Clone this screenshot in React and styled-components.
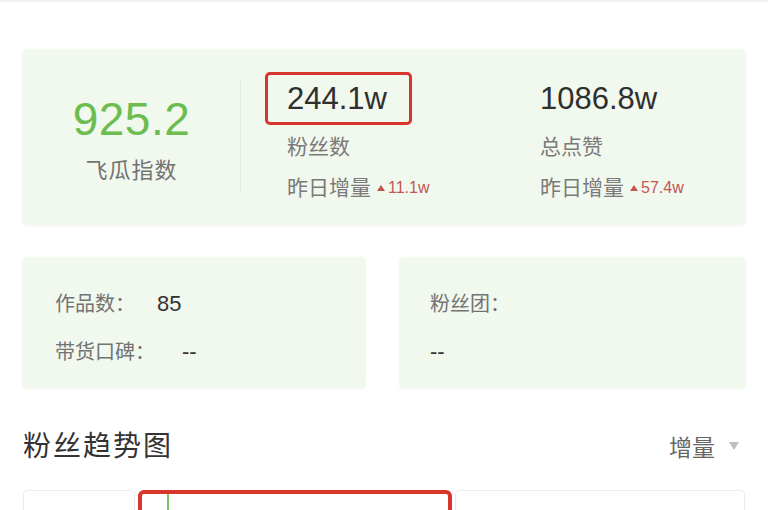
import styled, { createGlobalStyle } from 'styled-components'

const GlobalStyle = createGlobalStyle`
  html, body {
    margin: 0;
    padding: 0;
    background: #ffffff;
    height: 510px;
    overflow: hidden;
  }
  body {
    font-family: "Liberation Sans", "Noto Sans CJK SC", sans-serif;
    color: #333;
  }
`;

const Page = styled.div`
  border-top: 2px solid #eef0f2;
  padding: 48px 23px 0 23px;
  box-sizing: border-box;
  height: 510px;
`;

const Card = styled.div`
  background: #f1f8ee;
  border-radius: 4px;
  box-shadow: 0 0 3px rgba(220, 232, 214, 0.8);
`;

const SummaryCard = styled(Card)`
  display: flex;
  padding: 22px 0;
`;

const IndexBlock = styled.div`
  flex: 0 0 217px;
  display: flex;
  flex-direction: column;
  align-items: center;
  padding-top: 24px;
`;

const IndexValue = styled.div`
  font-size: 46px;
  line-height: 1;
  color: #6cbd4f;
  letter-spacing: 0.5px;
`;

const IndexLabel = styled.div`
  margin-top: 15px;
  font-size: 22px;
  line-height: 1.3;
  color: #737373;
  letter-spacing: 1px;
`;

const Divider = styled.div`
  flex: 0 0 1px;
  height: 112px;
  align-self: center;
  background: #e3e8e0;
`;

const StatColumn = styled.div`
  flex: 0 0 ${p => p.$width || 207}px;
  box-sizing: border-box;
  padding-left: 46px;
  display: flex;
  flex-direction: column;
  align-items: flex-start;
`;

const Highlight = styled.div`
  height: 53px;
  box-sizing: border-box;
  margin-left: -22px;
  padding: 0 22px 0 19px;
  border: 3px solid ${p => (p.$marked ? '#d8352c' : 'transparent')};
  border-radius: 5px;
  display: flex;
  align-items: center;
  font-size: 31px;
  color: #2f2f2f;
`;

const StatLabel = styled.div`
  margin-top: 7px;
  font-size: 21px;
  line-height: 1.4;
  color: #7a7a7a;
`;

const GrowthRow = styled.div`
  margin-top: 12px;
  display: flex;
  align-items: center;
  font-size: 21px;
  line-height: 1.4;
  color: #7a7a7a;
`;

const Growth = styled.span`
  margin-left: 6px;
  font-size: 16px;
  color: #c0574f;
  display: flex;
  align-items: center;
  gap: 3px;
  &::before {
    content: '';
    border-left: 4px solid transparent;
    border-right: 4px solid transparent;
    border-bottom: 6px solid #c0574f;
  }
`;

const InfoRow = styled.div`
  margin-top: 33px;
  display: grid;
  grid-template-columns: 342px 345px;
  justify-content: space-between;
`;

const InfoCard = styled(Card)`
  height: 130px;
  box-sizing: border-box;
  padding: 32px 0 0 ${p => p.$pad}px;
`;

const InfoLine = styled.div`
  display: flex;
  align-items: center;
  font-size: 20px;
  line-height: 28px;
  color: #737373;
  & + & {
    margin-top: 20px;
  }
`;

const InfoValue = styled.span`
  margin-left: ${p => p.$gap ?? 22}px;
  font-size: 22px;
  color: #333;
`;

const SectionHead = styled.div`
  margin-top: 39px;
  display: flex;
  justify-content: space-between;
  align-items: center;
`;

const SectionTitle = styled.h2`
  margin: 0;
  font-size: 28px;
  font-weight: 400;
  line-height: 1.4;
  color: #333;
  letter-spacing: 2px;
`;

const Toggle = styled.div`
  display: flex;
  align-items: center;
  gap: 14px;
  padding-right: 6px;
  font-size: 23px;
  color: #666;
  &::after {
    content: '';
    border-left: 5px solid transparent;
    border-right: 5px solid transparent;
    border-top: 8px solid #bfbfbf;
  }
`;

const ChartRow = styled.div`
  margin-top: 24px;
  display: flex;
  gap: 3px;
`;

const ChartCell = styled.div`
  flex: 0 0 ${p => p.$width}px;
  height: 80px;
  box-sizing: border-box;
  border: 1px solid #ececec;
  border-radius: 4px;
  padding: 14px 0 0 30px;
  font-size: 20px;
  color: #777;
`;

const MarkedCell = styled.div`
  flex: 0 0 314px;
  height: 80px;
  box-sizing: border-box;
  border: 4px solid #d8352c;
  border-radius: 6px;
  padding-left: 25px;
`;

const Axis = styled.div`
  width: 2px;
  height: 100%;
  background: #7dbf63;
`;

export default function App() {
  return (
    <>
      <GlobalStyle />
      <Page>
        <SummaryCard>
          <IndexBlock>
            <IndexValue>925.2</IndexValue>
            <IndexLabel>飞瓜指数</IndexLabel>
          </IndexBlock>
          <Divider />
          <StatColumn $width={253}>
            <Highlight $marked>244.1w</Highlight>
            <StatLabel>粉丝数</StatLabel>
            <GrowthRow>
              昨日增量<Growth>11.1w</Growth>
            </GrowthRow>
          </StatColumn>
          <StatColumn>
            <Highlight>1086.8w</Highlight>
            <StatLabel>总点赞</StatLabel>
            <GrowthRow>
              昨日增量<Growth>57.4w</Growth>
            </GrowthRow>
          </StatColumn>
        </SummaryCard>

        <InfoRow>
          <InfoCard $pad={32}>
            <InfoLine>
              作品数：<InfoValue>85</InfoValue>
            </InfoLine>
            <InfoLine>
              带货口碑：<InfoValue $gap={27}>--</InfoValue>
            </InfoLine>
          </InfoCard>
          <InfoCard $pad={30}>
            <InfoLine>粉丝团：</InfoLine>
            <InfoLine>
              <InfoValue $gap={0}>--</InfoValue>
            </InfoLine>
          </InfoCard>
        </InfoRow>

        <SectionHead>
          <SectionTitle>粉丝趋势图</SectionTitle>
          <Toggle>增量</Toggle>
        </SectionHead>

        <ChartRow>
          <ChartCell $width={112}>粉丝数</ChartCell>
          <MarkedCell>
            <Axis />
          </MarkedCell>
          <ChartCell $width={290} />
        </ChartRow>
      </Page>
    </>
  )
}
